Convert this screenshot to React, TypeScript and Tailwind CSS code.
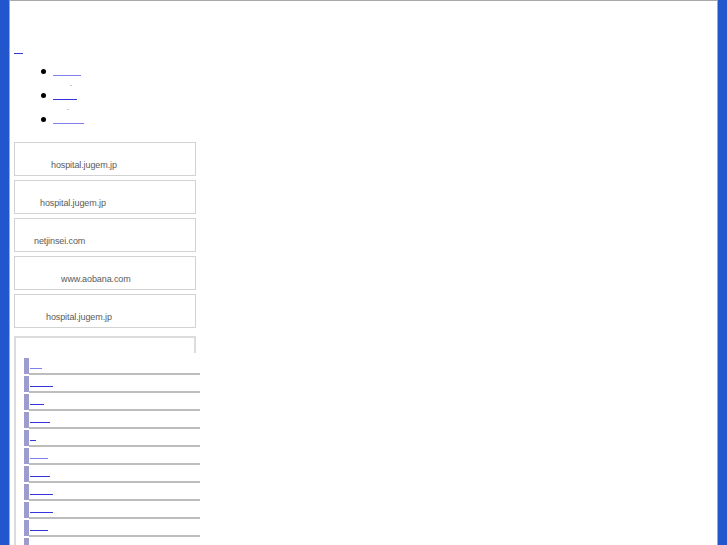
import React from 'react';

const topLinks = [
  { w: 28, dot: 18 },
  { w: 24, dot: 15 },
  { w: 31, dot: null },
];

const sites = [
  { name: 'hospital.jugem.jp', pad: 36 },
  { name: 'hospital.jugem.jp', pad: 25 },
  { name: 'netjinsei.com', pad: 19 },
  { name: 'www.aobana.com', pad: 46 },
  { name: 'hospital.jugem.jp', pad: 31 },
];

const menu = [12, 23, 14, 20, 6, 18, 20, 23, 23, 18, 20, 14];

// links whose text does not render: only the underline shows
const Blank = ({ w, light }: { w: number; light?: boolean }) => (
  <a href="#" className="block h-[2px] pb-[1px]" style={{ width: w }}>
    <span className={`block h-[1px] w-full ${light ? 'bg-[#7f7fee]' : 'bg-[#3535dd]'}`} />
  </a>
);

export default function App() {
  return (
    <div className="min-h-screen bg-[#2256cc] px-[9px] font-['Liberation_Sans',Arial,sans-serif]">
      <div className="min-h-screen bg-white border-x border-t border-[#a8a8a8] pl-[4px] pt-[52px]">
        <Blank w={9} />

        <ul className="mt-[11px]">
          {topLinks.map((l, i) => (
            <li key={i} className="h-[24px]">
              <div className="relative h-[12px]">
                <span className="absolute left-[27px] top-[3px] w-[5px] h-[5px] rounded-full bg-black" />
                <span className="absolute left-[39px] top-[9px]">
                  <Blank w={l.w} light={i !== 1} />
                </span>
              </div>
              {l.dot !== null && (
                <div className="h-[12px] text-[7px] leading-[12px] text-[#444]" style={{ paddingLeft: 38 + l.dot }}>
                  .
                </div>
              )}
            </li>
          ))}
        </ul>

        <div className="mt-[4px] flex flex-col gap-[4px]">
          {sites.map((s, i) => (
            <div
              key={i}
              className="w-[182px] h-[34px] border border-[#d2d2d2] pt-[16px] text-[9px] leading-[12px] text-[#5a5a5a] tracking-[-0.1px]"
              style={{ paddingLeft: s.pad }}
            >
              {s.name}
            </div>
          ))}
        </div>

        <div className="mt-[8px] w-[182px] border-l-2 border-t-2 border-[#dcdcdc]">
          <div className="h-[15px] border-r-2 border-[#dcdcdc]" />
          <ul className="mt-[5px] ml-[8px] w-[176px]">
            {menu.map((w, i) => (
              <li key={i} className="flex h-[18px]">
                <span className="w-[5px] h-[16px] bg-[#9c9cce]" />
                <div className="flex-1 h-[17px] border-b-2 border-[#bdbdbd] pl-[1px] pt-[10px]">
                  <Blank w={w} light={i === 0 || i === 5} />
                </div>
              </li>
            ))}
          </ul>
        </div>
      </div>
    </div>
  );
}
